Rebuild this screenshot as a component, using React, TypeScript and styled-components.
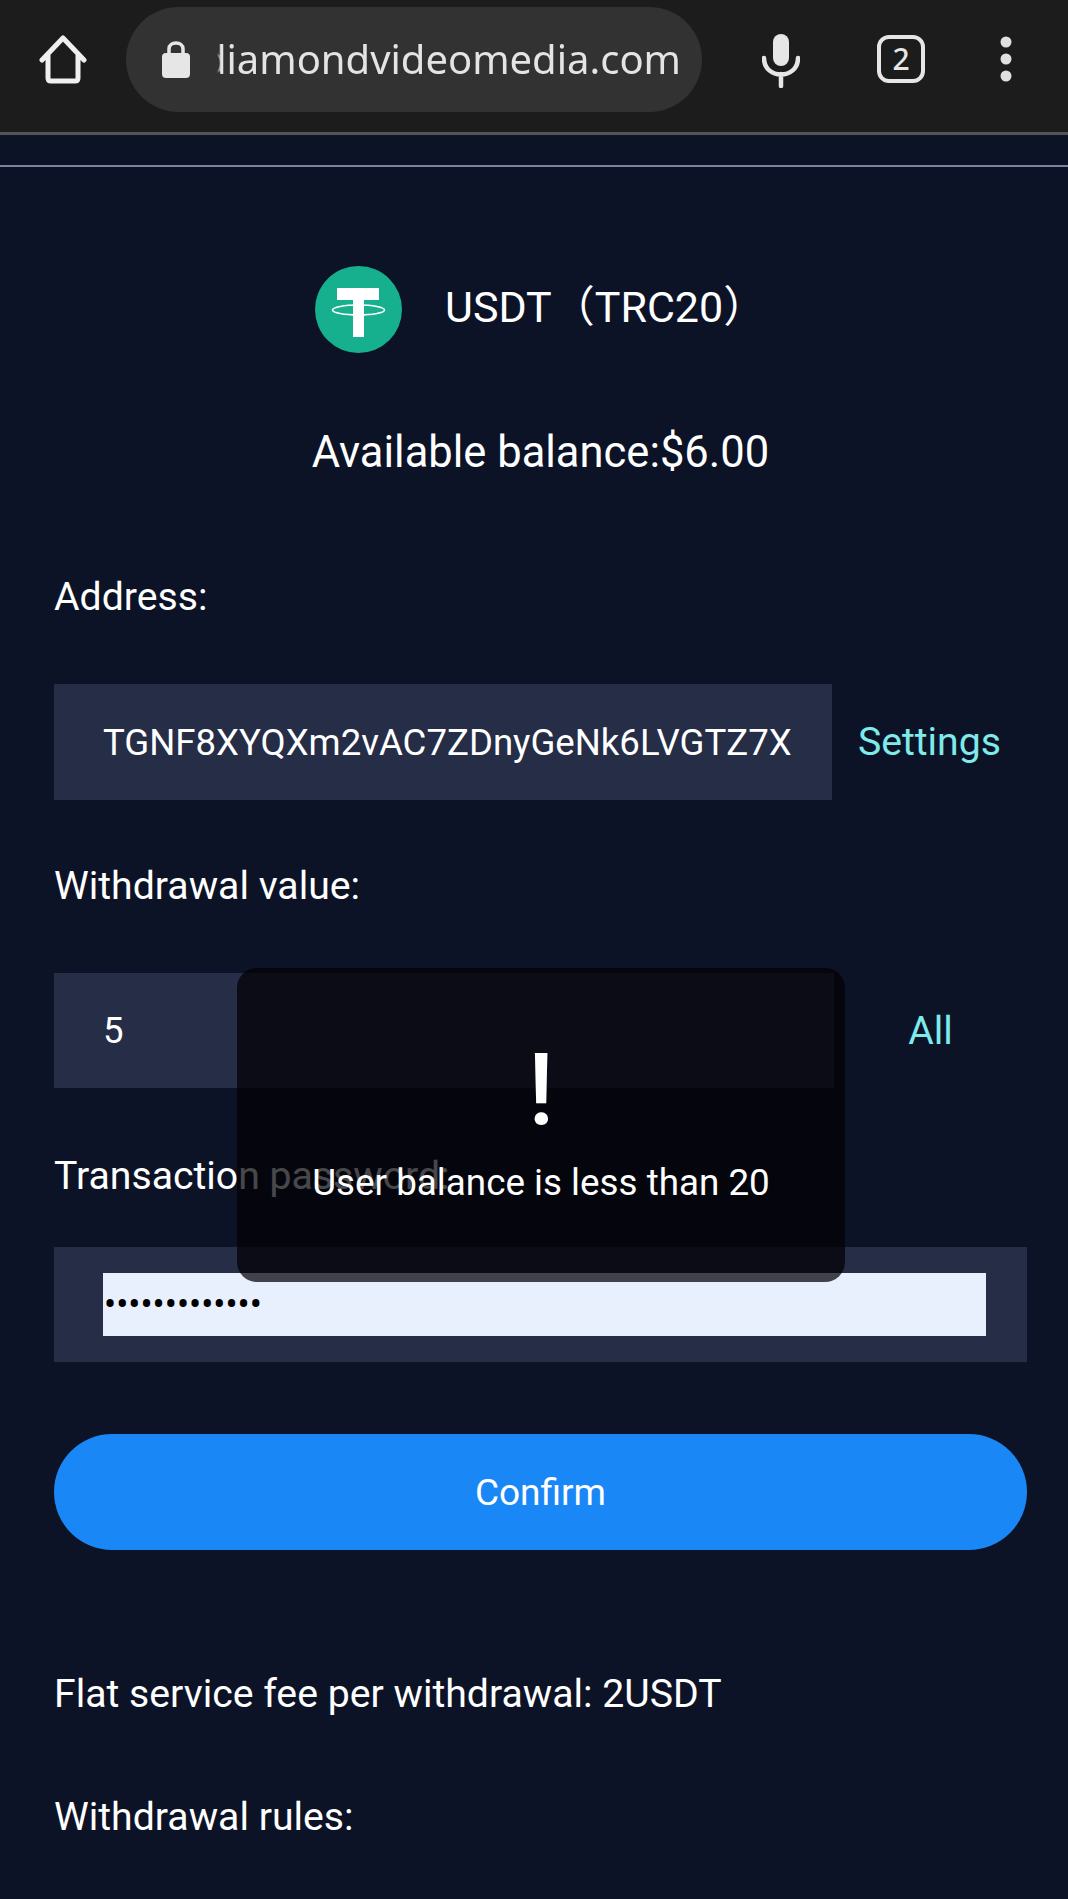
import * as React from "react"
import styled, { createGlobalStyle } from "styled-components"

const GlobalStyle = createGlobalStyle`
  html, body {
    margin: 0;
    padding: 0;
    background: #0c1327;
  }
  * {
    box-sizing: border-box;
  }
`

const HomeIcon = () => (
  <svg width="48" height="50" viewBox="0 0 48 50" fill="none">
    <path
      d="M3 25 L24 3 L45 25 M9 20 V43 Q9 46 12 46 H36 Q39 46 39 43 V20"
      stroke="#efefef"
      strokeWidth="5"
      strokeLinecap="round"
      strokeLinejoin="round"
    />
  </svg>
)

const LockIcon = () => (
  <svg width="28" height="38" viewBox="0 0 28 38" fill="none">
    <path d="M7 16 V9 C7 1 21 1 21 9 V16" stroke="#e6e6e6" strokeWidth="3.5" />
    <rect x="0" y="13" width="28" height="25" rx="4" fill="#e6e6e6" />
  </svg>
)

const MicIcon = () => (
  <svg width="38" height="54" viewBox="0 0 38 54" fill="none">
    <rect x="11" y="0" width="16" height="32" rx="8" fill="#e6e6e6" />
    <path
      d="M2 24 C2 46 36 46 36 24 M19 40 V52"
      stroke="#e6e6e6"
      strokeWidth="4.5"
      strokeLinecap="round"
    />
  </svg>
)

const MoreIcon = () => (
  <svg width="12" height="46" viewBox="0 0 12 46" fill="#e0e0e0">
    <circle cx="6" cy="6" r="5.5" />
    <circle cx="6" cy="23" r="5.5" />
    <circle cx="6" cy="40" r="5.5" />
  </svg>
)

const TetherLogo = () => (
  <svg width="87" height="87" viewBox="0 0 87 87">
    <circle cx="43.5" cy="43.5" r="43.5" fill="#17b08e" />
    <path d="M22 22 H64 V34 H49 V71 H38 V34 H22 Z" fill="#fff" />
    <ellipse cx="43.5" cy="44" rx="26" ry="5" fill="none" stroke="#fff" strokeWidth="1.6" />
  </svg>
)

const App = () => (
  <Page>
    <GlobalStyle />
    <BrowserBar>
      <HomeSlot>
        <HomeIcon />
      </HomeSlot>
      <UrlPill>
        <LockIcon />
        <UrlClip>
          <UrlText>diamondvideomedia.com</UrlText>
        </UrlClip>
      </UrlPill>
      <MicSlot>
        <MicIcon />
      </MicSlot>
      <TabCount>2</TabCount>
      <MoreSlot>
        <MoreIcon />
      </MoreSlot>
    </BrowserBar>
    <HeaderStrip />
    <Content>
      <CoinRow>
        <TetherLogo />
        <CoinName>USDT（TRC20）</CoinName>
      </CoinRow>
      <Balance>Available balance:$6.00</Balance>
      <FieldLabel $top={94}>Address:</FieldLabel>
      <FieldRow>
        <FieldBox $height={116}>
          <FieldInput readOnly value="TGNF8XYQXm2vAC7ZDnyGeNk6LVGTZ7X" />
        </FieldBox>
        <FieldAction>Settings</FieldAction>
      </FieldRow>
      <FieldLabel $top={61}>Withdrawal value:</FieldLabel>
      <FieldRow>
        <FieldBox $height={115}>
          <FieldInput readOnly value="5" />
        </FieldBox>
        <FieldAction>All</FieldAction>
      </FieldRow>
      <FieldLabel $top={63}>Transaction password:</FieldLabel>
      <PasswordBox>
        <PasswordInput readOnly type="password" value="1234567890123" />
      </PasswordBox>
      <ConfirmButton>Confirm</ConfirmButton>
      <Note $top={119}>Flat service fee per withdrawal: 2USDT</Note>
      <Note $top={73}>Withdrawal rules:</Note>
    </Content>
    <Toast>
      <ToastMark>!</ToastMark>
      <ToastText>User balance is less than 20</ToastText>
    </Toast>
  </Page>
)

const Page = styled.div`
  position: relative;
  width: 1068px;
  height: 1899px;
  overflow: hidden;
  background: #0c1327;
  color: #fff;
  font-family: Roboto, "Noto Sans CJK SC", sans-serif;
`

const BrowserBar = styled.header`
  display: flex;
  align-items: center;
  height: 135px;
  padding-bottom: 14px;
  background: #1c1c1c;
  border-bottom: 3px solid #545454;
`

const HomeSlot = styled.div`
  display: flex;
  justify-content: center;
  width: 126px;
  padding-top: 2px;
`

const UrlPill = styled.div`
  display: flex;
  align-items: center;
  width: 576px;
  height: 105px;
  padding: 0 21px 0 36px;
  border-radius: 53px;
  background: #323232;
`

const UrlClip = styled.div`
  display: flex;
  justify-content: flex-end;
  flex: 1;
  margin-left: 27px;
  overflow: hidden;
  mask-image: linear-gradient(to right, transparent 0, #000 4px);
`

const UrlText = styled.span`
  font-family: "Noto Sans", sans-serif;
  font-size: 40px;
  line-height: 50px;
  color: #e4e4e4;
  white-space: nowrap;
`

const MicSlot = styled.div`
  display: flex;
  justify-content: center;
  width: 157px;
  padding-top: 4px;
`

const TabCount = styled.div`
  display: flex;
  align-items: center;
  justify-content: center;
  width: 48px;
  height: 48px;
  margin-left: 18px;
  border: 4.5px solid #e6e6e6;
  border-radius: 12px;
  font-family: "Noto Sans", sans-serif;
  font-size: 30px;
  font-weight: 500;
  line-height: 1;
  color: #e6e6e6;
`

const MoreSlot = styled.div`
  display: flex;
  justify-content: center;
  margin-left: 75px;
`

const HeaderStrip = styled.div`
  height: 32px;
  border-bottom: 2px solid #7c84a0;
`

const Content = styled.main`
  padding: 99px 41px 0 54px;
`

const CoinRow = styled.div`
  display: flex;
  align-items: center;
  gap: 43px;
  margin-left: 261px;
`

const CoinName = styled.div`
  padding-bottom: 6px;
  font-size: 43px;
  line-height: 50px;
  white-space: nowrap;
`

const Balance = styled.div`
  margin-top: 75px;
  font-size: 43.5px;
  line-height: 50px;
  text-align: center;
  white-space: nowrap;
`

const FieldLabel = styled.div<{ $top: number }>`
  margin-top: ${props => props.$top}px;
  font-size: 39.2px;
  line-height: 50px;
`

const FieldRow = styled.div`
  display: flex;
  align-items: center;
  margin-top: 62px;
`

const FieldBox = styled.div<{ $height: number }>`
  display: flex;
  align-items: center;
  width: 780px;
  height: ${props => props.$height}px;
  padding: 0 41px 0 49px;
  background: #252d47;
`

const FieldInput = styled.input`
  width: 100%;
  padding: 0;
  border: 0;
  outline: 0;
  background: transparent;
  color: #fff;
  font-family: Roboto, sans-serif;
  font-size: 36.6px;
`

const FieldAction = styled.div`
  flex: 1;
  margin-left: 26px;
  margin-right: 26px;
  font-size: 39.2px;
  color: #7eeaea;
  text-align: center;
`

const PasswordBox = styled.div`
  display: flex;
  align-items: center;
  height: 115px;
  margin-top: 46px;
  padding: 0 41px 0 49px;
  background: #252d47;
`

const PasswordInput = styled.input`
  width: 100%;
  height: 63px;
  padding: 0 1px;
  border: 0;
  outline: 0;
  background: #e8f0fe;
  color: #000;
  font-family: Roboto, sans-serif;
  font-size: 36px;
`

const ConfirmButton = styled.button`
  display: block;
  width: 100%;
  height: 116px;
  margin-top: 72px;
  padding: 0;
  border: 0;
  border-radius: 58px;
  background: #1a87f7;
  color: #fff;
  font-family: Roboto, sans-serif;
  font-size: 37px;
`

const Note = styled.div<{ $top: number }>`
  margin-top: ${props => props.$top}px;
  font-size: 39.2px;
  line-height: 50px;
`

const Toast = styled.div`
  position: absolute;
  left: 237px;
  top: 968px;
  display: flex;
  flex-direction: column;
  align-items: center;
  width: 608px;
  height: 314px;
  border-radius: 20px;
  background: rgba(2, 0, 4, 0.72);
`

const ToastMark = styled.div`
  margin-top: 68px;
  font-size: 100px;
  font-weight: 500;
  line-height: 108px;
`

const ToastText = styled.div`
  margin-top: 14px;
  font-size: 36.8px;
  line-height: 50px;
`

export default App
